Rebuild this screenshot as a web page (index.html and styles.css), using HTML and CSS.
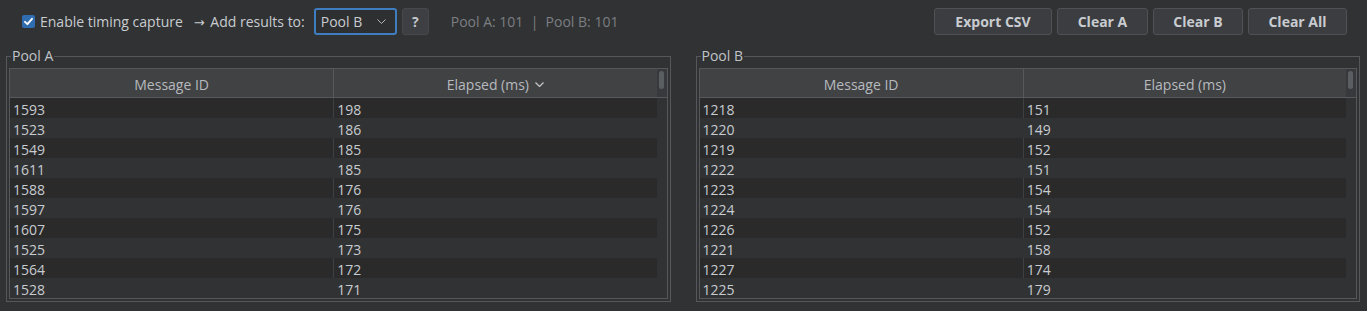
FILE: index.html
```html
<!DOCTYPE html>
<html>
<head>
<meta charset="utf-8">
<link rel="stylesheet" href="styles.css">
</head>
<body>
<div class="toolbar">
  <label class="check"><span class="box"><svg viewBox="0 0 13 13" width="13" height="13"><path d="M3 6.8 L5.4 9.2 L10 3.8" fill="none" stroke="#fff" stroke-width="1.9" stroke-linecap="round" stroke-linejoin="round"/></svg></span>Enable timing capture</label>
  <span class="lbl"><span class="arrow">→</span> Add results to:</span>
  <div class="combo"><span>Pool B</span><svg width="9" height="5" viewBox="0 0 9 5"><path d="M0.5 0.5 L4.5 4.5 L8.5 0.5" fill="none" stroke="#b5b9bd" stroke-width="1"/></svg></div>
  <div class="help">?</div>
  <span class="status">Pool A: 101 &nbsp;|&nbsp; Pool B: 101</span>
  <div class="spacer"></div>
  <div class="btns">
    <button class="btn w-export">Export CSV</button>
    <button class="btn w-a">Clear A</button>
    <button class="btn w-b">Clear B</button>
    <button class="btn w-all">Clear All</button>
  </div>
</div>
<div class="pools">
  <fieldset class="group">
    <legend>Pool A</legend>
    <div class="table">
      <div class="head">
        <div class="hcell">Message ID</div>
        <div class="hcell sep">Elapsed (ms)<svg class="sort" width="9" height="5" viewBox="0 0 9 5"><path d="M0.5 0.5 L4.5 4.5 L8.5 0.5" fill="none" stroke="#c4c8cc" stroke-width="1.2"/></svg></div>
        <div class="sb"><div class="thumb"></div></div>
      </div>
      <div class="body">
        <div class="row"><div class="c">1593</div><div class="c sep">198</div></div>
        <div class="row"><div class="c">1523</div><div class="c sep">186</div></div>
        <div class="row"><div class="c">1549</div><div class="c sep">185</div></div>
        <div class="row"><div class="c">1611</div><div class="c sep">185</div></div>
        <div class="row"><div class="c">1588</div><div class="c sep">176</div></div>
        <div class="row"><div class="c">1597</div><div class="c sep">176</div></div>
        <div class="row"><div class="c">1607</div><div class="c sep">175</div></div>
        <div class="row"><div class="c">1525</div><div class="c sep">173</div></div>
        <div class="row"><div class="c">1564</div><div class="c sep">172</div></div>
        <div class="row"><div class="c">1528</div><div class="c sep">171</div></div>
      </div>
    </div>
  </fieldset>
  <fieldset class="group">
    <legend>Pool B</legend>
    <div class="table">
      <div class="head">
        <div class="hcell">Message ID</div>
        <div class="hcell sep">Elapsed (ms)</div>
        <div class="sb"><div class="thumb"></div></div>
      </div>
      <div class="body">
        <div class="row"><div class="c">1218</div><div class="c sep">151</div></div>
        <div class="row"><div class="c">1220</div><div class="c sep">149</div></div>
        <div class="row"><div class="c">1219</div><div class="c sep">152</div></div>
        <div class="row"><div class="c">1222</div><div class="c sep">151</div></div>
        <div class="row"><div class="c">1223</div><div class="c sep">154</div></div>
        <div class="row"><div class="c">1224</div><div class="c sep">154</div></div>
        <div class="row"><div class="c">1226</div><div class="c sep">152</div></div>
        <div class="row"><div class="c">1221</div><div class="c sep">158</div></div>
        <div class="row"><div class="c">1227</div><div class="c sep">174</div></div>
        <div class="row"><div class="c">1225</div><div class="c sep">179</div></div>
      </div>
    </div>
  </fieldset>
</div>
</body>
</html>
```
FILE: styles.css
```css
html, body {
  margin: 0;
  padding: 0;
  background: #313234;
  width: 1367px;
  height: 311px;
  overflow: hidden;
  font-family: "Open Sans", "Noto Sans", sans-serif;
  font-size: 14px;
  color: #c8ccd0;
}
.toolbar {
  display: flex;
  align-items: center;
  height: 27px;
  padding: 8px 20px 0 22px;
}
.check {
  display: flex;
  align-items: center;
  gap: 5px;
  color: #c8ccd0;
}
.box {
  width: 13px;
  height: 13px;
  background: #2f6db0;
  border-radius: 2px;
  display: block;
}
.box svg { display: block; }
.lbl {
  margin-left: 11px;
}
.arrow {
  font-family: "DejaVu Sans", sans-serif;
  font-size: 13px;
  margin-right: 2px;
}
.combo {
  margin-left: 9px;
  height: 23px;
  border: 2px solid #3e7ec0;
  border-radius: 3px;
  display: flex;
  align-items: center;
  justify-content: space-between;
  padding: 0 9px 0 5px;
  box-sizing: content-box;
  width: 65px;
  background: #2e2f31;
}
.combo span { color: #c8ccd0; }
.help {
  margin-left: 5px;
  width: 27px;
  height: 27px;
  box-sizing: border-box;
  background: #3d3f42;
  border: 1px solid #46484b;
  border-radius: 3px;
  display: flex;
  align-items: center;
  justify-content: center;
  font-weight: bold;
  color: #c4c8cc;
}
.status {
  margin-left: 22px;
  color: #7b7e82;
}
.spacer { flex: 1; }
.btns {
  display: flex;
  gap: 5px;
}
.btn {
  height: 27px;
  box-sizing: border-box;
  background: #3b3d40;
  border: 1px solid #4f5255;
  border-radius: 3px;
  color: #c8ccd0;
  font-family: "Open Sans", "Noto Sans", sans-serif;
  font-weight: bold;
  font-size: 14px;
  padding: 0;
}
.w-export { width: 118px; }
.w-a { width: 91px; }
.w-b { width: 90px; }
.w-all { width: 99px; }
.pools {
  display: flex;
  gap: 25px;
  padding: 13px 7px 0 6px;
}
.group {
  flex: 1;
  margin: 0;
  border: 1px solid #55575a;
  padding: 4px 2px 2px 2px;
  min-width: 0;
}
legend {
  padding: 0 1px;
  margin-left: 2px;
  line-height: 16px;
  color: #c0c4c8;
}
.table {
  border: 1px solid #55575a;
  height: 229px;
  overflow: hidden;
}
.head {
  display: grid;
  grid-template-columns: 1fr 1fr 10px;
  background: #414244;
  border-bottom: 1px solid #58595c;
  box-sizing: border-box;
  height: 29px;
}
.hcell {
  display: flex;
  align-items: center;
  justify-content: center;
  color: #b6babe;
  gap: 6px;
  padding-top: 2px;
}
.hcell.sep { border-left: 1px solid #58595c; }
.sort { margin-top: 1px; }
.sb {
  background: #38393c;
  position: relative;
}
.thumb {
  position: absolute;
  left: 2px;
  top: 2px;
  width: 5px;
  height: 18px;
  background: #5b5e61;
  border-radius: 3px;
}
.body {
  margin-right: 10px;
}
.row {
  display: grid;
  grid-template-columns: 1fr 1fr;
  height: 20px;
}
.row:nth-child(odd) { background: #2a2a2b; }
.c {
  padding-left: 3px;
  padding-top: 2px;
  box-sizing: border-box;
  height: 20px;
  line-height: 20px;
  overflow: hidden;
  color: #c8ccd0;
}
.c.sep { border-left: 1px solid #3f4042; }
.row:nth-child(even) .c.sep { border-left-color: transparent; }
```
